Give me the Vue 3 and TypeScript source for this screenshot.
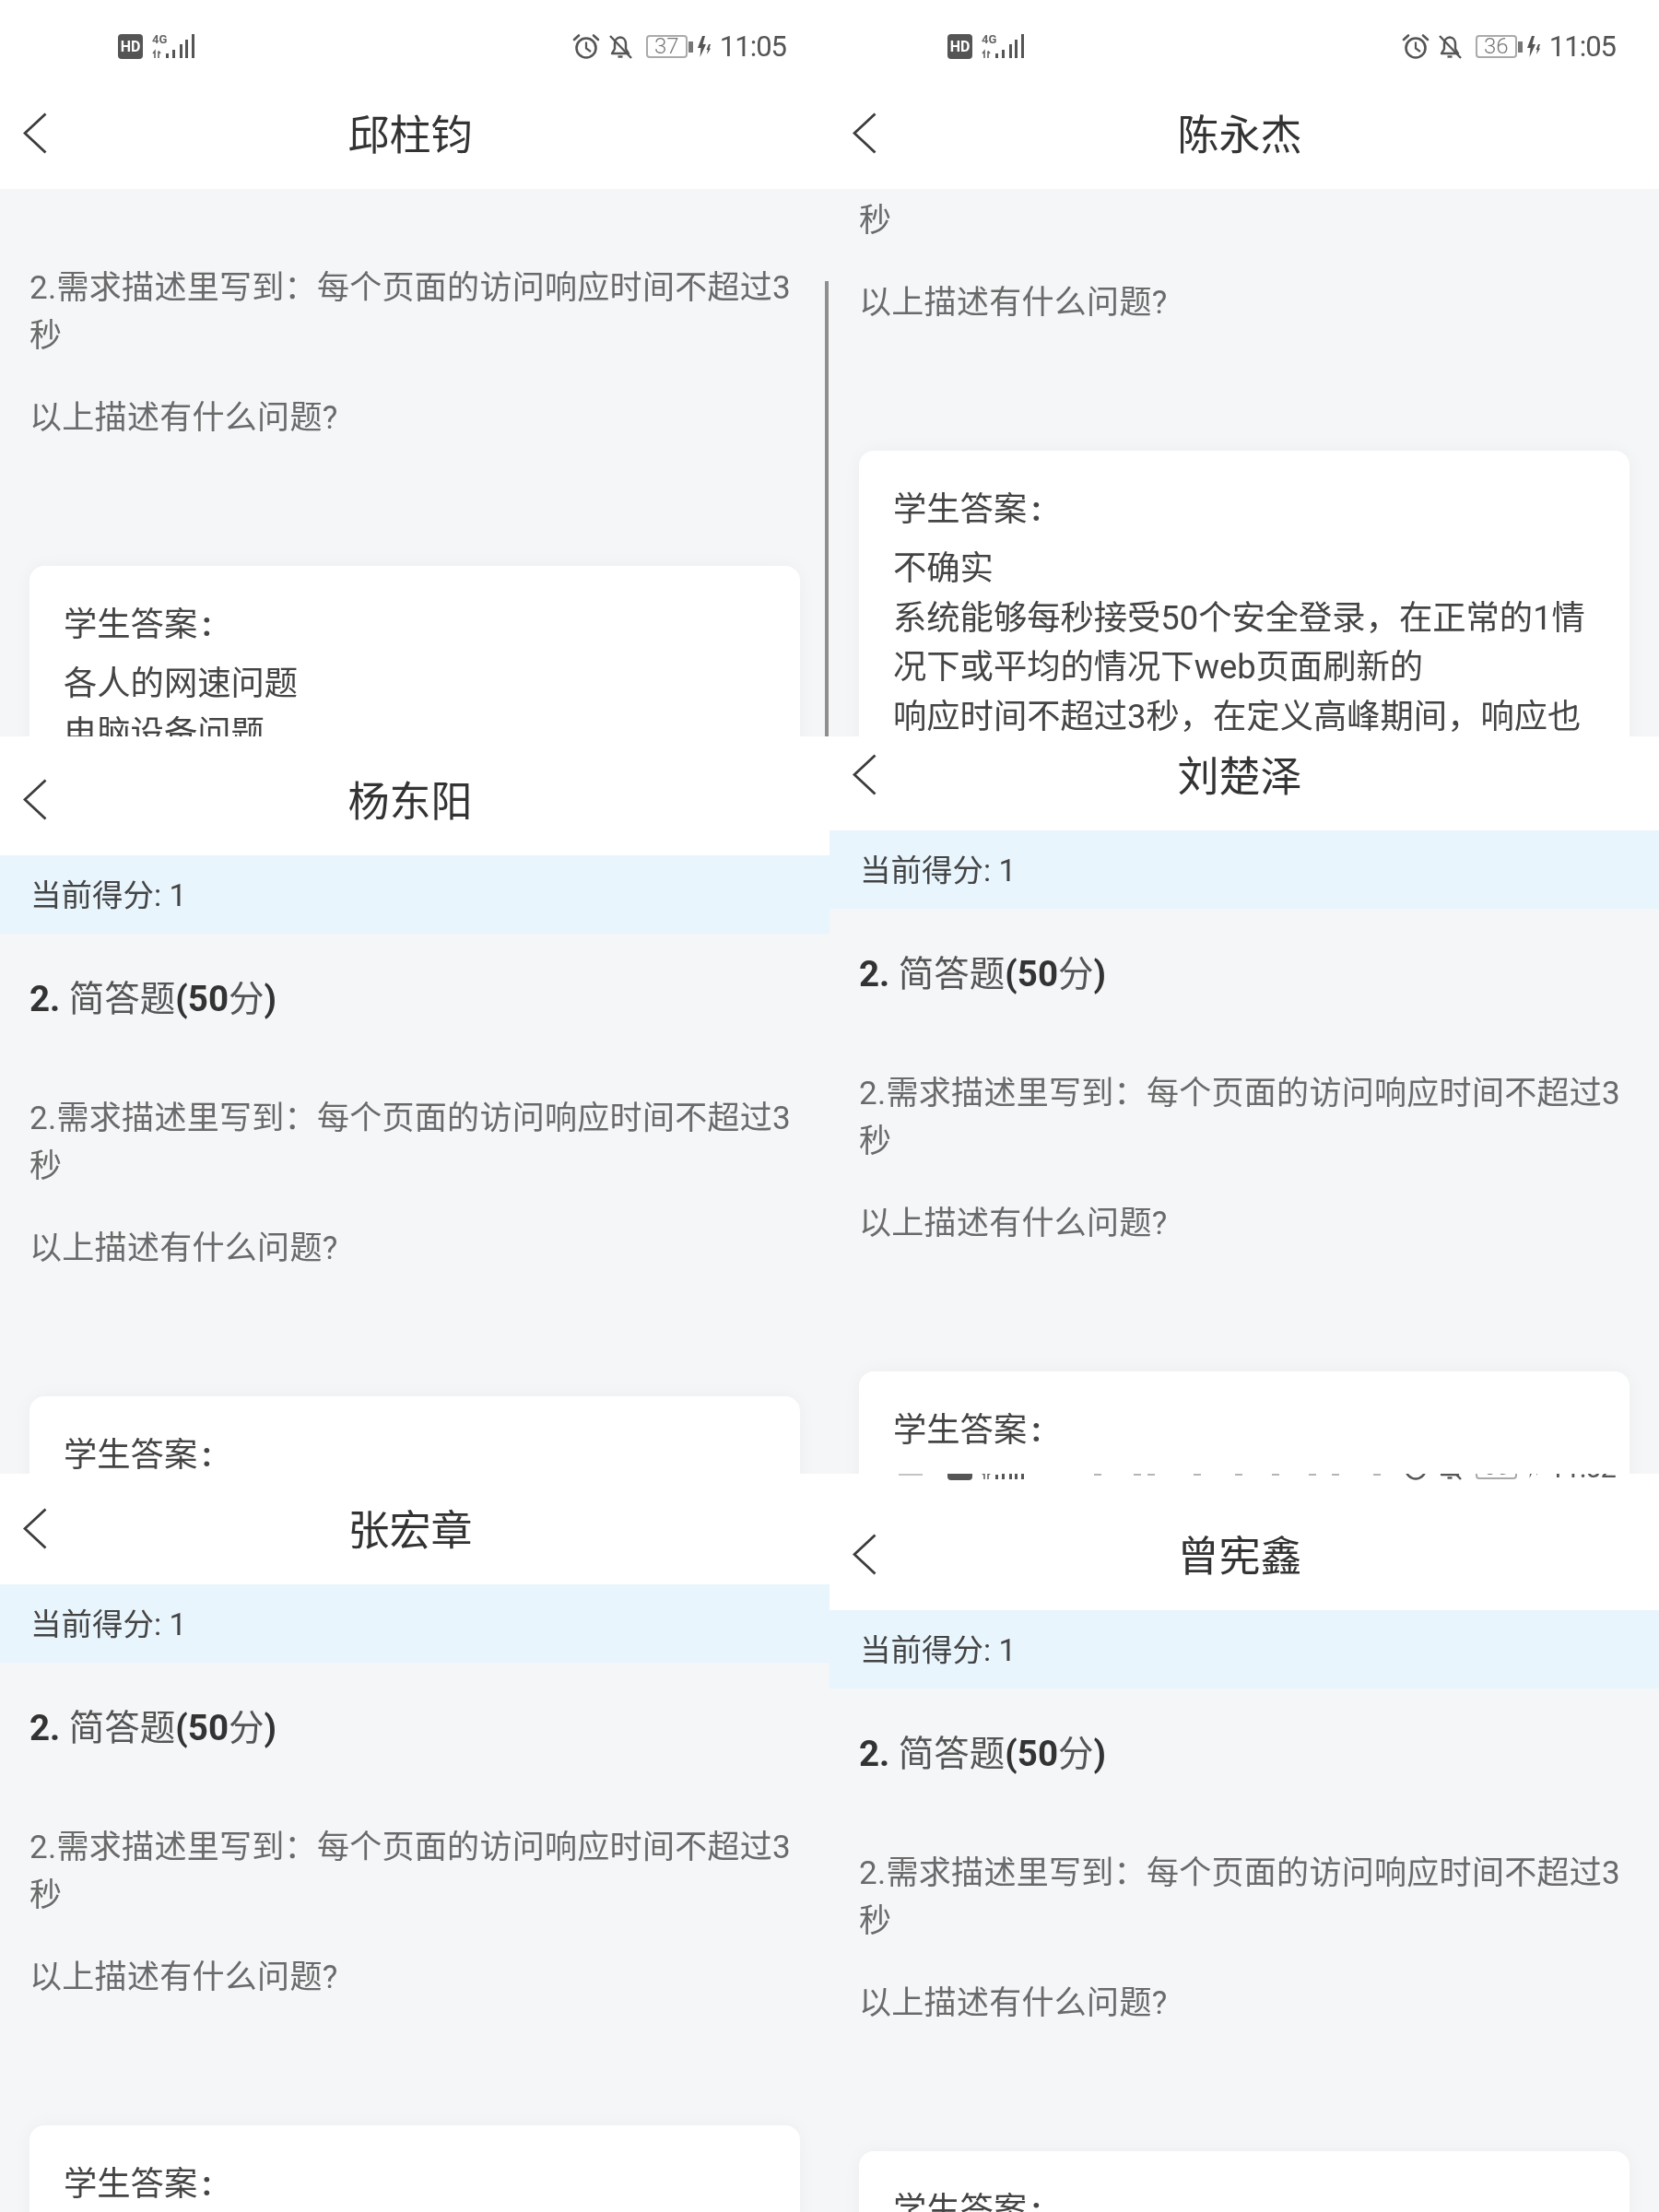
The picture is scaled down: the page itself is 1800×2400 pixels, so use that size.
<script setup lang="ts">
interface Panel {
  name: string;
  clip: number; // px of the phone screen cut off at the top of the slice
  scroll: number; // how far the page under the nav bar is scrolled
  height: number;
  battery: string;
  time: string;
  answer: string[];
  scrollbar?: boolean;
  marks?: boolean;
}

const panels: Panel[] = [
  {
    name: "邱柱钧",
    clip: 0,
    scroll: 178,
    height: 799,
    battery: "37",
    time: "11:05",
    answer: ["各人的网速问题", "电脑设备问题"],
    scrollbar: true,
  },
  {
    name: "陈永杰",
    clip: 0,
    scroll: 303,
    height: 799,
    battery: "36",
    time: "11:05",
    answer: [
      "不确实",
      "系统能够每秒接受50个安全登录，在正常的1情",
      "况下或平均的情况下web页面刷新的",
      "响应时间不超过3秒，在定义高峰期间，响应也",
    ],
  },
  { name: "杨东阳", clip: 76, scroll: 0, height: 800, battery: "37", time: "11:05", answer: [] },
  { name: "刘楚泽", clip: 103, scroll: 0, height: 800, battery: "36", time: "11:05", answer: [] },
  { name: "张宏章", clip: 85, scroll: 0, height: 801, battery: "37", time: "11:05", answer: [] },
  { name: "曾宪鑫", clip: 57, scroll: 0, height: 801, battery: "35", time: "11:02", answer: [], marks: true },
];

const bars = [
  { x: 15, h: 5 },
  { x: 22, h: 9 },
  { x: 30, h: 15 },
  { x: 36, h: 20 },
  { x: 43, h: 26 },
];
const markXs = [287, 330, 345, 395, 440, 480, 520, 545, 590];
</script>

<template>
  <div class="page">
    <section
      v-for="p in panels"
      :key="p.name"
      class="panel"
      :style="{ height: p.height + 'px' }"
    >
      <div class="screen" :style="{ marginTop: -p.clip + 'px' }">
        <div class="status">
          <span v-if="p.marks" class="status__dash" />
          <div class="status__left">
            <span class="hd">HD</span>
            <div class="signal">
              <span class="signal__net">4G</span>
              <svg class="signal__bars" width="46" height="28" viewBox="0 0 46 28">
                <path d="M1 22L3 19.5V27M7 27V19.5M7 19.5L9 22" fill="none" stroke="#666" stroke-width="1.6" />
                <rect
                  v-for="b in bars"
                  :key="b.x"
                  :x="b.x"
                  :y="27 - b.h"
                  width="3"
                  :height="b.h"
                  fill="#555"
                />
              </svg>
            </div>
          </div>
          <svg v-if="p.marks" class="status__marks" width="320" height="30" viewBox="0 0 320 30">
            <rect v-for="x in markXs" :key="x" :x="x - 287" y="21" width="8" height="2" fill="#b5b5b5" />
          </svg>
          <div class="status__right">
            <svg width="30" height="29" viewBox="0 0 30 29" fill="none" stroke="#555" stroke-width="2.6">
              <circle cx="15" cy="16" r="10.5" />
              <path d="M15 9.5V16.5L20 20" stroke-width="2.2" />
              <path d="M2 7L7 2.5M28 7L23 2.5" stroke-linecap="round" />
            </svg>
            <svg class="bell" width="26" height="28" viewBox="0 0 26 28" fill="none" stroke="#555" stroke-width="2.4">
              <path d="M7 11C7 6.5 9.5 3.5 13 3.5C16.5 3.5 19 6.5 19 11V16L22 21H4L7 16Z" stroke-linejoin="round" />
              <path d="M10.5 24.5H15.5" />
              <path d="M2 2L25 26" />
            </svg>
            <div class="battery">
              <span class="battery__level">{{ p.battery }}</span>
            </div>
            <span class="battery__nub" />
            <svg class="bolt" width="15" height="24" viewBox="0 0 15 24" fill="#555">
              <path d="M5 0L0 13H3.5L2.5 23L9 9H5.5L8 0Z" />
              <path d="M12 9L9.5 15H11L10 20L14 13.5H12.5L14 9Z" />
            </svg>
            <span class="time">{{ p.time }}</span>
          </div>
        </div>

        <header class="nav">
          <svg class="nav__back" width="26" height="45" viewBox="0 0 26 45" fill="none" stroke="#3c3c3c" stroke-width="2.8">
            <path d="M24.5 1.5L2 22.5L24.5 43.5" />
          </svg>
          <h1 class="nav__title">{{ p.name }}</h1>
        </header>

        <div class="viewport">
          <div class="content" :style="{ marginTop: -p.scroll + 'px' }">
            <div class="score">当前得分: 1</div>
            <div class="body">
              <h2 class="question"><b>2.</b> 简答题<b>(50</b>分<b>)</b></h2>
              <p class="para">2.需求描述里写到：每个页面的访问响应时间不超过3秒</p>
              <p class="para para--next">以上描述有什么问题?</p>
              <div class="card">
                <div class="card__label">学生答案<span class="card__colon">:</span></div>
                <div class="card__answer">
                  <div v-for="line in p.answer" :key="line" class="card__line">{{ line }}</div>
                </div>
              </div>
            </div>
          </div>
        </div>
      </div>
      <span v-if="p.scrollbar" class="scrollbar" />
    </section>
  </div>
</template>

<style scoped>
.page {
  display: grid;
  grid-template-columns: 900px 900px;
  width: 1800px;
  height: 2400px;
  overflow: hidden;
  font-family: Roboto, "Noto Sans CJK SC", sans-serif;
  filter: blur(0.6px);
}

.panel {
  position: relative;
  overflow: hidden;
  background: #f5f6f8;
}

.screen {
  display: flex;
  flex-direction: column;
}

.status {
  position: relative;
  display: flex;
  justify-content: space-between;
  align-items: flex-start;
  height: 88px;
  padding: 36px 47px 0 128px;
  box-sizing: border-box;
  background: #fff;
}

.status__dash {
  position: absolute;
  left: 75px;
  top: 57px;
  width: 26px;
  height: 2px;
  background: #c4c4c4;
}

.status__marks {
  position: absolute;
  left: 287px;
  top: 36px;
}

.status__left {
  display: flex;
  align-items: center;
  gap: 10px;
}

.hd {
  width: 27px;
  height: 27px;
  border-radius: 4px;
  background: #555;
  color: #fff;
  font-size: 16px;
  font-weight: 700;
  line-height: 27px;
  text-align: center;
}

.signal {
  position: relative;
  width: 46px;
  height: 28px;
}

.signal__net {
  position: absolute;
  left: 0;
  top: 0;
  color: #666;
  font-size: 13px;
  font-weight: 700;
  line-height: 13px;
}

.signal__bars {
  position: absolute;
  left: 0;
  top: 0;
}

.status__right {
  display: flex;
  align-items: center;
  height: 29px;
}

.bell {
  margin-left: 9px;
}

.battery {
  width: 45px;
  height: 25px;
  margin-left: 15px;
  border: 2px solid #aaa;
  border-radius: 4px;
  box-sizing: border-box;
  text-align: center;
}

.battery__level {
  display: block;
  color: #777;
  font-size: 24px;
  font-weight: 300;
  line-height: 21px;
}

.battery__nub {
  width: 5px;
  height: 12px;
  margin-left: 1px;
  background: #777;
}

.bolt {
  margin-left: 5px;
}

.time {
  margin-left: 9px;
  color: #555;
  font-size: 31px;
  letter-spacing: -1px;
  line-height: 29px;
}

.nav {
  display: grid;
  grid-template-columns: 76px 1fr 86px;
  align-items: center;
  height: 117px;
  padding-left: 25px;
  box-sizing: border-box;
  background: #fff;
}

.nav__back {
  margin-top: -4px;
}

.nav__title {
  grid-column: 2;
  margin: 2px 0 0 -25px;
  color: #333;
  font-size: 45px;
  font-weight: 400;
  line-height: 60px;
  text-align: center;
}

.viewport {
  flex: 1;
  overflow: hidden;
}

.score {
  height: 85px;
  padding-left: 33px;
  background: #e8f5fd;
  color: #444;
  font-size: 33.5px;
  line-height: 87px;
}

.body {
  padding: 46px 32px 0;
}

.question {
  margin: 0;
  color: #555;
  font-size: 38.5px;
  font-weight: 400;
  line-height: 50px;
}

.question b {
  color: #333;
  font-weight: 700;
}

.para {
  margin: 79px 0 0;
  color: #6a6a6a;
  font-size: 35px;
  letter-spacing: 0.3px;
  line-height: 52px;
}

.para--next {
  margin-top: 37px;
}

.card {
  min-height: 400px;
  margin-top: 134px;
  padding: 38px 37px 0;
  border-radius: 16px;
  background: #fff;
  box-shadow: 0 0 20px rgba(0, 0, 0, 0.04);
  color: #444;
  font-size: 36.3px;
}

.card__label {
  line-height: 52px;
}

.card__colon {
  margin-left: 5px;
  font-weight: 700;
}

.card__answer {
  margin-top: 11px;
}

.card__line {
  line-height: 53.7px;
  white-space: nowrap;
}

.scrollbar {
  position: absolute;
  top: 305px;
  bottom: 0;
  right: 1px;
  width: 4px;
  background: #8f8f8f;
}
</style>

<style>
html,
body {
  margin: 0;
  background: #fff;
}
</style>
